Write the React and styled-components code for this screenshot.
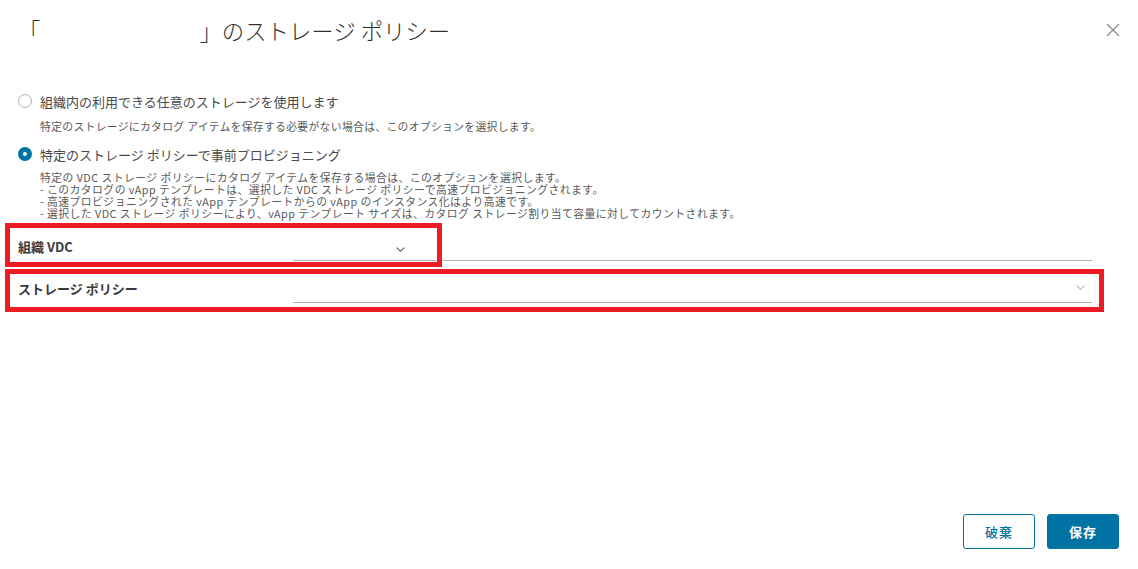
import styled, { createGlobalStyle } from 'styled-components';

const GlobalStyle = createGlobalStyle`
  html, body { margin: 0; padding: 0; background: #fff; }
  body { font-family: "Noto Sans CJK JP", "Noto Sans", sans-serif; color: #333; }
  * { box-sizing: border-box; }
`;

const Page = styled.div`
  min-height: 100vh;
  display: flex;
  flex-direction: column;
  position: relative;
`;

const Header = styled.header`
  height: 60px;
  display: flex;
  align-items: center;
  justify-content: space-between;
  padding: 0 18px 0 18px;
`;

const Title = styled.h1`
  margin: 0;
  font-size: 22.4px;
  line-height: 30px;
  font-weight: 300;
  color: #313131;
  display: flex;
  align-items: center;
`;

const Blank = styled.span`
  display: inline-block;
  width: 159px;
`;

const Close = styled.button`
  border: none;
  background: none;
  padding: 0;
  width: 14px;
  height: 14px;
  display: flex;
  cursor: pointer;
`;

const Body = styled.div`
  padding-top: 31px;
  display: flex;
  flex-direction: column;
`;

const RadioOption = styled.label`
  display: flex;
  align-items: center;
  gap: 8px;
  height: 20px;
  padding-left: 18px;
  margin-top: ${(p) => p.$mt || 0}px;
  font-size: 13px;
  color: #4a4a4a;
  cursor: pointer;
`;

const Radio = styled.span`
  width: 14px;
  height: 14px;
  border-radius: 50%;
  flex-shrink: 0;
  background: #fff;
  border: ${(p) => (p.$checked ? '5px solid #0072a3' : '1px solid #b3b3b3')};
`;

const Help = styled.div`
  padding-left: 40px;
  margin-top: ${(p) => p.$mt}px;
  font-size: 10.8px;
  line-height: ${(p) => p.$lh}px;
  letter-spacing: ${(p) => p.$ls}px;
  color: #595959;
`;

const FieldRow = styled.div`
  position: relative;
  height: 42px;
  display: flex;
  align-items: flex-start;
  padding-left: 18px;
  margin-top: ${(p) => p.$mt || 0}px;
`;

const FieldLabel = styled.span`
  width: 275px;
  margin-top: 9px;
  line-height: 20px;
  font-size: 13px;
  font-weight: 700;
  color: #3a3a3a;
`;

const SelectTrack = styled.div`
  width: 799px;
  height: 33px;
  border-bottom: 1px solid #b3b3b3;
  display: flex;
`;

const SelectBox = styled.div`
  width: ${(p) => p.$w};
  display: flex;
  align-items: center;
  justify-content: flex-end;
  padding-right: 7px;
  padding-top: ${(p) => p.$pt}px;
  align-self: flex-start;
  height: 30px;
`;

const Highlight = styled.div`
  position: absolute;
  left: 5px;
  top: ${(p) => p.$top}px;
  width: ${(p) => p.$w}px;
  height: ${(p) => p.$h}px;
  border: 5px solid #ed1c24;
  pointer-events: none;
`;

const Footer = styled.footer`
  margin-top: auto;
  display: flex;
  justify-content: flex-end;
  gap: 12px;
  padding: 0 19px 20px 0;
`;

const Button = styled.button`
  width: 72px;
  height: 35px;
  border-radius: 3px;
  border: 1px solid #0072a3;
  background: ${(p) => (p.$primary ? '#0072a3' : '#fff')};
  color: ${(p) => (p.$primary ? '#fff' : '#0072a3')};
  font-family: "Noto Sans CJK JP", sans-serif;
  font-size: 13px;
  font-weight: ${(p) => (p.$primary ? 700 : 500)};
  letter-spacing: 1px;
  cursor: pointer;
`;

const Chevron = ({ color }) => (
  <svg width="9" height="5" viewBox="0 0 9 5">
    <path d="M0.6 0.6 L4.5 4.2 L8.4 0.6" fill="none" stroke={color} strokeWidth="1.2" />
  </svg>
);

const App = () => {
  return (
    <>
      <GlobalStyle />
      <Page>
        <Header>
          <Title>
            「<Blank />」のストレージ ポリシー
          </Title>
          <Close aria-label="閉じる">
            <svg width="14" height="14" viewBox="0 0 14 14">
              <path d="M1 1 L13 13 M13 1 L1 13" stroke="#8c8c8c" strokeWidth="1.3" />
            </svg>
          </Close>
        </Header>
        <Body>
          <RadioOption>
            <Radio />
            組織内の利用できる任意のストレージを使用します
          </RadioOption>
          <Help $mt={8} $lh={14} $ls={0.33}>
            特定のストレージにカタログ アイテムを保存する必要がない場合は、このオプションを選択します。
          </Help>
          <RadioOption $mt={11}>
            <Radio $checked />
            特定のストレージ ポリシーで事前プロビジョニング
          </RadioOption>
          <Help $mt={7} $lh={12} $ls={0.46}>
            特定の VDC ストレージ ポリシーにカタログ アイテムを保存する場合は、このオプションを選択します。
            <br />- このカタログの vApp テンプレートは、選択した VDC ストレージ ポリシーで高速プロビジョニングされます。
            <br />- 高速プロビジョニングされた vApp テンプレートからの vApp のインスタンス化はより高速です。
            <br />- 選択した VDC ストレージ ポリシーにより、vApp テンプレート サイズは、カタログ ストレージ割り当て容量に対してカウントされます。
          </Help>
          <FieldRow $mt={9}>
            <FieldLabel>組織 VDC</FieldLabel>
            <SelectTrack>
              <SelectBox $w="119px" $pt={13}>
                <Chevron color="#666" />
              </SelectBox>
            </SelectTrack>
            <Highlight $top={-5} $w={437} $h={44} />
          </FieldRow>
          <FieldRow>
            <FieldLabel>ストレージ ポリシー</FieldLabel>
            <SelectTrack>
              <SelectBox $w="100%" $pt={4}>
                <Chevron color="#bbb" />
              </SelectBox>
            </SelectTrack>
            <Highlight $top={-1} $w={1099} $h={43} />
          </FieldRow>
        </Body>
        <Footer>
          <Button>破棄</Button>
          <Button $primary>保存</Button>
        </Footer>
      </Page>
    </>
  );
};

export default App;
